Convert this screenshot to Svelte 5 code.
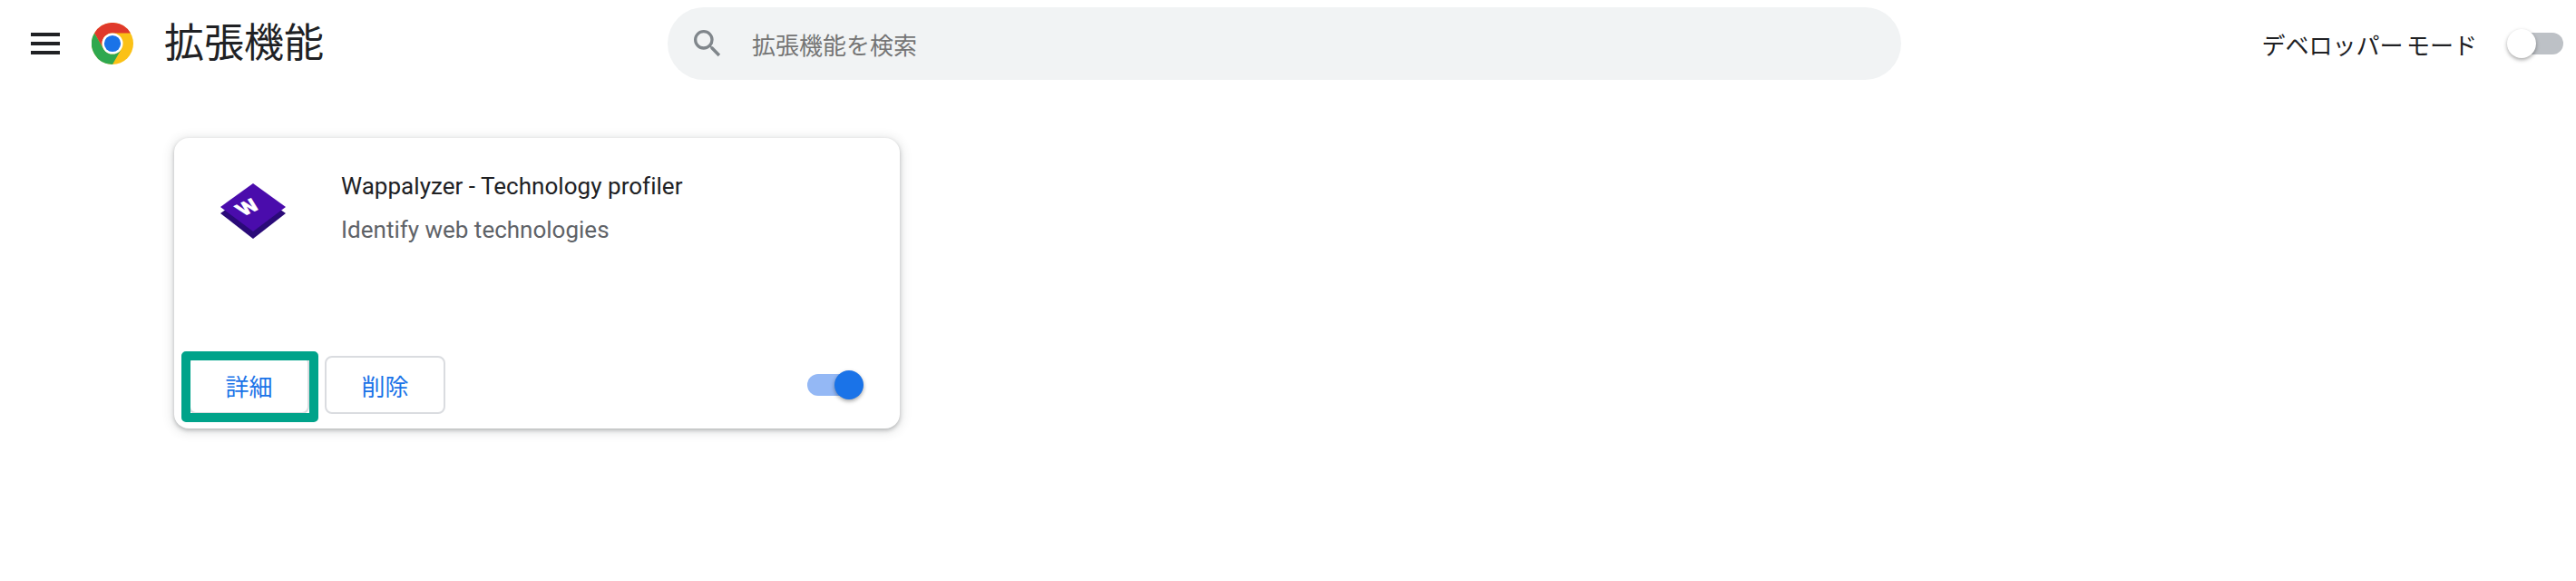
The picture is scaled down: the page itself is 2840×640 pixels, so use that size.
<script>
  let devMode = $state(false);
  let enabled = $state(true);
</script>

<div class="page">
  <header class="toolbar">
    <div class="brand">
      <button class="menu" aria-label="メニュー">
        <span></span><span></span><span></span>
      </button>
      <svg class="chrome" viewBox="0 0 48 48" aria-hidden="true">
        <circle cx="24" cy="24" r="24" fill="#fbc116"/>
        <path d="M3.200 12A24 24 0 0 1 44.800 12H24A12 12 0 0 0 13.600 30Z" fill="#e0392b"/>
        <path d="M3.200 12 13.600 30A12 12 0 0 0 34.400 30L24 48A24 24 0 0 1 3.200 12Z" fill="#2fa84f"/>
        <circle cx="24" cy="24" r="12" fill="#fff"/>
        <circle cx="24" cy="24" r="9.500" fill="#1a73e8"/>
      </svg>
      <h1>拡張機能</h1>
    </div>
    <div class="search">
      <svg viewBox="0 0 24 24" aria-hidden="true">
        <path d="M15.500 14h-.79l-.28-.27A6.471 6.471 0 0 0 16 9.500 6.500 6.500 0 1 0 9.500 16c1.610 0 3.090-.59 4.230-1.570l.27.28v.79l5 4.990L20.490 19l-4.990-5zm-6 0C7.010 14 5 11.990 5 9.500S7.010 5 9.500 5 14 7.010 14 9.500 11.990 14 9.500 14z" fill="#80868b"/>
      </svg>
      <span>拡張機能を検索</span>
    </div>
    <div class="dev">
      <span>デベロッパー モード</span>
      <button class="toggle" class:on={devMode} aria-label="デベロッパー モード" onclick={() => (devMode = !devMode)}><i></i></button>
    </div>
  </header>

  <main>
    <article class="card">
      <div class="body">
        <svg class="logo" viewBox="0 0 72 61" aria-hidden="true">
          <path d="M36 8 72 33 36 61 0 33Z" fill="#2a0a78"/>
          <path d="M36 0 72 26 36 53 0 26Z" fill="#4a0cac"/>
          <text class="w" text-anchor="middle" transform="matrix(.9 -.42 .62 .62 31 34)" x="5">W</text>
        </svg>
        <div class="info">
          <h2>Wappalyzer - Technology profiler</h2>
          <p>Identify web technologies</p>
        </div>
      </div>
      <div class="foot">
        <div class="actions">
          <div class="highlighted">
            <button class="btn">詳細</button>
            <span class="mark"></span>
          </div>
          <button class="btn">削除</button>
        </div>
        <button class="toggle" class:on={enabled} aria-label="有効" onclick={() => (enabled = !enabled)}><i></i></button>
      </div>
    </article>
  </main>
</div>

<style>
  :global(body) { margin: 0; background: #fff; }
  .page {
    height: 640px;
    font-family: Roboto, "Noto Sans CJK JP", sans-serif;
    color: #202124;
    overflow: hidden;
  }
  button { font: inherit; background: none; padding: 0; cursor: pointer; }
  .toolbar { display: flex; align-items: center; height: 96px; }
  .brand { display: flex; align-items: center; width: 736px; flex: none; padding-left: 34px; box-sizing: border-box; }
  .menu { width: 32px; height: 24px; border: 0; display: flex; flex-direction: column; justify-content: space-between; }
  .menu span { display: block; height: 4px; background: #202124; }
  .chrome { width: 46px; height: 46px; margin-left: 35px; }
  h1 { margin: 0 0 0 34px; font-size: 44px; font-weight: 400; line-height: 56px; }
  .search {
    width: 1360px; height: 80px; flex: none; box-sizing: border-box;
    display: flex; align-items: center; padding-left: 24px;
    background: #f1f3f4; border-radius: 40px;
    font-size: 26px; color: #757575;
  }
  .search svg { width: 40px; height: 40px; flex: none; }
  .search span { margin-left: 29px; }
  .dev { margin-left: auto; display: flex; align-items: center; padding-right: 14px; font-size: 26px; word-spacing: -3px; }
  .dev .toggle { margin-left: 35px; }
  .toggle { position: relative; width: 60px; height: 24px; border: 0; border-radius: 12px; background: #bdc1c6; display: block; }
  .toggle i {
    position: absolute; left: -2px; top: -4px; width: 32px; height: 32px; border-radius: 50%;
    background: #fff; box-shadow: 0 2px 4px rgba(0,0,0,.35);
  }
  .toggle.on { background: #94b8f5; }
  .toggle.on i { left: auto; right: -2px; background: #1a73e8; }
  main { padding: 56px 0 0 192px; }
  .card {
    width: 800px; height: 320px; box-sizing: border-box;
    background: #fff; border-radius: 16px;
    box-shadow: 0 2px 4px rgba(60,64,67,.3), 0 2px 12px 2px rgba(60,64,67,.15);
    display: flex; flex-direction: column; justify-content: space-between;
  }
  .body { display: flex; padding: 35px 0 0 51px; }
  .logo { width: 72px; height: 61px; flex: none; margin-top: 15px; }
  .w { font: 900 26px Roboto, sans-serif; fill: #fff; }
  .info { margin-left: 61px; }
  h2 { margin: 0; font-size: 26px; font-weight: 400; line-height: 36px; letter-spacing: .03px; color: #202124; }
  p { margin: 12px 0 0; font-size: 26px; line-height: 36px; color: #5f6368; }
  .foot { display: flex; align-items: center; justify-content: space-between; padding: 0 42px 16px 16px; }
  .actions { display: flex; gap: 17px; }
  .btn {
    width: 133px; height: 64px; box-sizing: border-box;
    border: 2px solid #dadce0; border-radius: 8px; color: #1a73e8; font-size: 26px;
  }
  .highlighted { position: relative; display: flex; }
  .mark {
    position: absolute; left: -8px; right: -10px; top: -5px; bottom: -9px;
    border: 10px solid #00a38a; border-radius: 5px; pointer-events: none;
  }
</style>
